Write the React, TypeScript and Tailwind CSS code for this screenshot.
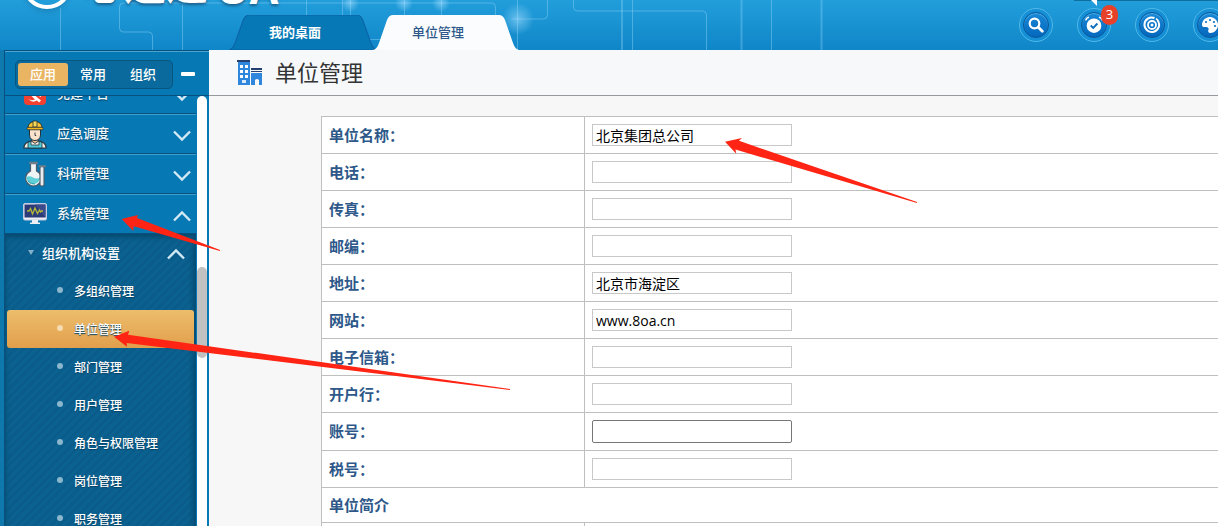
import React from 'react';
import {FaPalette} from 'react-icons/fa';

type Field = {
    id: string;
    label: string;
    value?: string;
    focused?: boolean;
};

const fields: Field[] = [
    {id: 'name', label: '单位名称：', value: '北京集团总公司'},
    {id: 'phone', label: '电话：'},
    {id: 'fax', label: '传真：'},
    {id: 'zip', label: '邮编：'},
    {id: 'address', label: '地址：', value: '北京市海淀区'},
    {id: 'site', label: '网站：', value: 'www.8oa.cn'},
    {id: 'email', label: '电子信箱：'},
    {id: 'bank', label: '开户行：'},
    {id: 'account', label: '账号：', focused: true},
    {id: 'tax', label: '税号：'},
];

const subItems = ['多组织管理', '单位管理', '部门管理', '用户管理', '角色与权限管理', '岗位管理', '职务管理'];

function PartyIcon(): React.JSX.Element {
    return (
        <svg width="24" height="26" viewBox="0 0 24 26">
            <rect x="1" y="2" width="22" height="22" rx="4" fill="#f4402f"/>
            <path d="M5 17.500q3 3 7 1l-4-4 3-3 2 2-1 1 6 5-2 2-2-2q-5 3-9-2z" fill="#fff"/>
            <path d="M13 7q6 2 5 9l-2-1q0-5-3-8z" fill="#fff"/>
        </svg>
    );
}

function WorkerIcon(): React.JSX.Element {
    return (
        <svg width="24" height="29" viewBox="0 0 24 29">
            <path d="M0.800 28c.3-5 3-6.600 8.200-7.200h6c5.200.6 7.900 2.200 8.200 7.200z" fill="#f4efe6" stroke="#22313c" strokeWidth="1.200"/>
            <path d="M5 22v6h14v-6l-3-.5v3.500H8v-3.500z" fill="#4fc9d8" stroke="#22313c" strokeWidth=".8"/>
            <path d="M9 18h6v3.500l-3 2-3-2z" fill="#eab98e" stroke="#22313c" strokeWidth=".8"/>
            <path d="M6.500 9v6c0 3.500 2.500 5.500 5.500 5.500s5.500-2 5.500-5.500V9z" fill="#fbe3cb" stroke="#22313c"/>
            <path d="M12 12.500v3h1.200" fill="none" stroke="#22313c" strokeWidth=".9"/>
            <path d="M5 8c.2-4.300 3-6.500 7-6.500S18.800 3.700 19 8z" fill="#fbc531" stroke="#22313c"/>
            <path d="M10 1h4v6h-4z" fill="#fbd85a" stroke="#22313c" strokeWidth=".8"/>
            <rect x="4" y="7.300" width="16" height="2.500" rx="1" fill="#f7b71c" stroke="#22313c" strokeWidth=".8"/>
        </svg>
    );
}

function FlaskIcon(): React.JSX.Element {
    return (
        <svg width="24" height="26" viewBox="0 0 24 26">
            <path d="M7.500 2h6v8a7.800 7.800 0 1 1-6 0z" fill="#eef3f5" stroke="#4c5966" strokeWidth="1.200"/>
            <path d="M3.500 16q3-1.500 6.500.5t7.200 0a6.800 6.800 0 1 1-13.700-.5z" fill="#5fd0d8"/>
            <rect x="6.200" y=".8" width="8.600" height="2.400" rx="1" fill="#707e8b"/>
            <rect x="17" y="5.500" width="4" height="19.500" rx="1.500" fill="#e6ecef" stroke="#4c5966" strokeWidth="1.100"/>
            <rect x="15.500" y="4.200" width="7.500" height="2" rx="1" fill="#707e8b"/>
            <path d="M5 20q3 3.500 7 3" stroke="#2d9ea7" fill="none"/>
        </svg>
    );
}

function MonitorIcon(): React.JSX.Element {
    return (
        <svg width="24" height="22" viewBox="0 0 24 22">
            <rect x=".5" y=".5" width="23" height="16.500" rx="1.500" fill="#eef0f6" stroke="#c5cbe0"/>
            <rect x="1.500" y="1.500" width="21" height="13" fill="#2c3a78"/>
            <path d="M12 1.500h10.500v13z" fill="#3b4a8b"/>
            <path d="M4 8h2l1.500-2.500L9.500 11l2.500-6 2.500 5.500 2-3.500 1 2 1-1h1.500" fill="none" stroke="#b5b838" strokeWidth="1.300"/>
            <path d="M9 17h6v2.500h2V21H7v-1.500h2z" fill="#eceef4"/>
        </svg>
    );
}

function BuildingIcon(): React.JSX.Element {
    return (
        <svg width="26" height="26" viewBox="0 0 26 26">
            <path d="M1 1h12v24H1z" fill="#2f86dd"/>
            <path d="M0 0h13v2H0z" fill="#26406f"/>
            <path d="M3 5h3v3H3zM8 5h3v3H8zM3 10h3v3H3zM8 10h3v3H8zM3 15h3v3H3zM8 15h3v3H8z" fill="#fff"/>
            <path d="M5 20h4v3H5z" fill="#d7e9fb"/>
            <path d="M14 13h11v12h-3v-5q-2-2-4 0v5h-4z" fill="#2f86dd"/>
            <path d="M14 8h11v2H14zM14 11h11v1H14z" fill="#26406f"/>
        </svg>
    );
}

function SearchGlyph(): React.JSX.Element {
    return (
        <svg width="16" height="16" viewBox="0 0 16 16" fill="none" stroke="#fff" className="shrink-0">
            <circle cx="6.500" cy="6.500" r="4.800" strokeWidth="2.200"/>
            <path d="M10.300 10.300l4 4" strokeWidth="2.800" strokeLinecap="round"/>
        </svg>
    );
}

function AlarmGlyph(): React.JSX.Element {
    return (
        <svg width="18" height="18" viewBox="0 0 18 18" className="shrink-0">
            <circle cx="9" cy="9.700" r="7.300" fill="#fff"/>
            <path d="M.8 4.300q.5-2.500 3.200-3M17.200 4.300q-.5-2.500-3.200-3" fill="none" stroke="#fff" strokeWidth="1.500"/>
            <path d="M5.700 9.500l2.500 2.400 4.200-4.400" fill="none" stroke="#0b6fc0" strokeWidth="1.900"/>
        </svg>
    );
}

function TargetGlyph(): React.JSX.Element {
    return (
        <svg width="18" height="18" viewBox="0 0 18 18" fill="none" stroke="#fff" className="shrink-0">
            <path d="M11.500 2A7.300 7.300 0 1 0 14.700 4.500" strokeWidth="2"/>
            <path d="M13 2.600q1.300.9 2.200 2.200" strokeWidth="1.500"/>
            <circle cx="9" cy="9" r="4" strokeWidth="1.800"/>
            <circle cx="9" cy="9" r="1.500" fill="#fff" stroke="none"/>
        </svg>
    );
}

function Chevron({up}: { up?: boolean }): React.JSX.Element {
    return (
        <svg width="18" height="12" viewBox="0 0 18 12" fill="none" stroke="#d3e8f5" strokeWidth="2.400" className="shrink-0">
            {up ? <path d="M1 10.500l8-8 8 8"/> : <path d="M1 1.500l8 8 8-8"/>}
        </svg>
    );
}

function HeaderLines(): React.JSX.Element {
    return (
        <svg className="absolute inset-0" width="100%" height="50" aria-hidden="true">
            <defs>
                <radialGradient id="glow">
                    <stop offset="0" stopColor="#9fdcff" stopOpacity=".6"/>
                    <stop offset="1" stopColor="#9fdcff" stopOpacity="0"/>
                </radialGradient>
            </defs>
            <g fill="none" stroke="#8fd3f5" strokeOpacity=".45">
                <path d="M60.500 8v42M182.500 0v50M306.500 0v18"/>
                <path d="M152.500 50V36q0-4-4-4h-25q-4 0-4-4V7q0-4 4-4h368q4 0 4 4v12"/>
                <path d="M404.500 0v18M441.500 0v18M342.500 0v18M350.500 0v18M517.500 0v50"/>
                <path d="M547.500 0v15q0 4-4 4h-32M368 39.500h12M573.500 0v7q0 4 4 4h125q4 0 4 4v35"/>
                <path d="M632.500 0v50M771.500 0v50"/>
                <path d="M622 0v50M741.500 0v50M821.500 0v50" strokeWidth="2" strokeOpacity=".35"/>
            </g>
            <circle cx="350" cy="3" r="9" fill="url(#glow)"/>
            <circle cx="404" cy="3" r="9" fill="url(#glow)"/>
            <circle cx="441" cy="3" r="9" fill="url(#glow)"/>
            <circle cx="518" cy="19" r="16" fill="url(#glow)"/>
        </svg>
    );
}

function Tab({label, active}: { label: string; active?: boolean }): React.JSX.Element {
    return (
        <button
            type="button"
            role="tab"
            aria-selected={!!active}
            className={active
                ? 'relative -ml-1 h-[35px] w-[146px] pr-4 text-[13px] font-medium text-[#2d5889]'
                : 'relative h-[35px] w-[148px] pr-4 text-[13px] font-bold text-white'}
        >
            <svg className="absolute inset-0" width="100%" height="100%" viewBox="0 0 146 35" preserveAspectRatio="none">
                <path
                    d="M0 35q4-1 6-7l8-23q2-5 6-5h106q4 0 6 5l8 23q2 6 6 7z"
                    fill={active ? '#fbfcfd' : '#0578b5'}
                    stroke={active ? 'none' : '#0d63a5'}
                />
            </svg>
            <span className="relative">{label}</span>
        </button>
    );
}

function RoundButton({label, children}: { label: string; children: React.ReactNode }): React.JSX.Element {
    return (
        <button
            type="button"
            aria-label={label}
            className="relative flex size-[34px] shrink-0 items-center justify-center rounded-full border border-[#4fb9e8] bg-[#1590d6] p-[3px]"
        >
            <span className="flex size-full items-center justify-center rounded-full border border-[#0a5799] bg-linear-to-b from-[#1a87d6] to-[#0468bd] text-white shadow-[inset_0_1px_1px_#4fb4ea]">
                {children}
            </span>
        </button>
    );
}

function Header(): React.JSX.Element {
    return (
        <header className="relative flex h-[50px] shrink-0 overflow-hidden bg-linear-to-b from-[#229edb] to-[#0f86c8]">
            <HeaderLines/>
            <div className="relative -mt-[45px] flex h-[54px] w-[229px] shrink-0 items-end self-start text-[42px] leading-[50px] font-bold whitespace-nowrap text-white [text-shadow:0_2px_3px_#1a5f8c]">
                <span className="ml-[22px] size-[50px] shrink-0 rounded-full border-4 border-white shadow-md"/>
                <span className="ml-[10px]">心通达</span>
                <span className="-mb-1 ml-2">OA</span>
            </div>
            <div role="tablist" className="relative flex shrink-0 items-end">
                <Tab label="我的桌面"/>
                <Tab label="单位管理" active/>
            </div>
            <div className="relative -mr-[9px] ml-auto flex items-center gap-6">
                <RoundButton label="搜索"><SearchGlyph/></RoundButton>
                <div className="relative">
                    <RoundButton label="提醒"><AlarmGlyph/></RoundButton>
                    <span className="absolute -top-[3px] left-6 flex h-5 w-[17px] items-center justify-center rounded-full bg-[#e8412a] text-[13px] text-white">3</span>
                </div>
                <RoundButton label="目标"><TargetGlyph/></RoundButton>
                <RoundButton label="主题"><FaPalette size={16} className="-scale-x-100"/></RoundButton>
                <svg className="absolute top-0 left-[55px]" width="160" height="6">
                    <path d="M0 0h160v1H0z" fill="#0e6f9f"/>
                    <path d="M17 0h6v6z" fill="#fff"/>
                </svg>
            </div>
        </header>
    );
}

function MenuItem({icon, label, open}: { icon: React.ReactNode; label: string; open?: boolean }): React.JSX.Element {
    return (
        <button
            type="button"
            aria-expanded={!!open}
            className="flex h-10 w-full shrink-0 items-center border-t border-b border-t-[#3f9fce] border-b-[#07507d] pr-[5px] pl-[18px] text-left text-[13px] font-medium text-[#eef7fc] [text-shadow:0_1px_1px_#063f63]"
        >
            <span className="flex w-6 justify-center">{icon}</span>
            <span className="ml-[10px] flex-1">{label}</span>
            <span className="pt-1"><Chevron up={open}/></span>
        </button>
    );
}

function Sidebar(): React.JSX.Element {
    return (
        <aside className="flex w-[209px] shrink-0 flex-col border-l-4 border-[#0f78ac] bg-[#0678b3]">
            <div className="flex h-[46px] shrink-0 items-center border-b border-l border-[#07507d] pl-[10px] shadow-[inset_0_1px_0_#07507d,inset_0_2px_0_#4aa6d2]">
                <div className="mt-1 flex h-[29px] w-[158px] items-center rounded-[5px] border border-[#07567f] bg-[#0a6a9d] px-[2px] text-[13px] font-medium text-white [text-shadow:0_1px_1px_#34506a]">
                    <button type="button" className="h-[23px] w-[50px] rounded-[3px] bg-[#e9b563]">应用</button>
                    <button type="button" className="h-[23px] w-[50px]">常用</button>
                    <button type="button" className="h-[23px] w-[50px]">组织</button>
                </div>
                <button type="button" aria-label="收起" className="mt-[2px] ml-2 h-1 w-[14px] rounded-[1px] bg-white"/>
            </div>
            <div className="flex min-h-0 flex-1">
                <nav className="flex min-w-0 flex-1 flex-col overflow-hidden border-l border-[#07507d]">
                    <div className="-mt-[22px] flex flex-col">
                        <MenuItem icon={<PartyIcon/>} label="党建平台"/>
                        <MenuItem icon={<WorkerIcon/>} label="应急调度"/>
                        <MenuItem icon={<FlaskIcon/>} label="科研管理"/>
                        <MenuItem icon={<MonitorIcon/>} label="系统管理" open/>
                    </div>
                    <div className="bg-[#0b608f] bg-[repeating-linear-gradient(135deg,#0b618f_0px,#0b618f_3px,#0a5d8a_3px,#0a5d8a_6px)] text-white shadow-[inset_0_3px_5px_#084a70,inset_-3px_0_4px_#09507a] [text-shadow:0_1px_1px_#063f63]">
                        <button type="button" aria-expanded="true" className="flex h-[38px] w-full items-center pt-[2px] pr-[11px] pl-[23px] text-left text-[13px] font-medium">
                            <span className="mb-1 border-x-[3px] border-t-[5px] border-x-transparent border-t-[#82b0c9]"/>
                            <span className="ml-2 flex-1">组织机构设置</span>
                            <Chevron up/>
                        </button>
                        <ul>
                            {subItems.map((item) => (
                                <li key={item} className="px-[2px]">
                                    <a
                                        href="#"
                                        className={item === '单位管理'
                                            ? 'flex h-[38px] items-center rounded-[3px] bg-linear-to-b from-[#ecbd6c] to-[#e29f4b] pt-[2px] pl-[50px] text-[12px] font-medium'
                                            : 'flex h-[38px] items-center pt-[2px] pl-[50px] text-[12px] font-medium'}
                                    >
                                        <span className={item === '单位管理'
                                            ? 'mb-1 size-[6px] rounded-full bg-[#f6dcb2]'
                                            : 'mb-1 size-[6px] rounded-full bg-[#8ab7ce]'}/>
                                        <span className="ml-[11px]">{item}</span>
                                    </a>
                                </li>
                            ))}
                        </ul>
                    </div>
                </nav>
                <div className="ml-[1px] mr-[2px] w-[10px] shrink-0 rounded-t-[5px] bg-white pt-[171px]">
                    <div className="h-[91px] rounded-[5px] bg-[#c1c1c1]"/>
                </div>
            </div>
        </aside>
    );
}

function FieldRow({field}: { field: Field }): React.JSX.Element {
    return (
        <tr>
            <th scope="row" className="w-[263px] border border-[#bfbfbf] px-[7px] text-left text-[15px] font-bold text-[#2d5889]">
                <label htmlFor={field.id}>{field.label}</label>
            </th>
            <td className="border border-r-0 border-[#bfbfbf] p-[7px]">
                <input
                    id={field.id}
                    type="text"
                    defaultValue={field.value}
                    className={field.focused
                        ? 'block h-[23px] w-[200px] rounded-[2px] border border-[#767676] bg-white px-[3px] text-[14px] text-black outline-none'
                        : 'block h-[22px] w-[200px] border border-[#c8c8c8] bg-white px-[3px] text-[14px] text-black outline-none'}
                />
            </td>
        </tr>
    );
}

function Arrows(): React.JSX.Element {
    return (
        <svg className="pointer-events-none absolute top-0 left-0" width="920" height="400" fill="#ff2413" aria-hidden="true">
            <path d="M725 141.700L742 138l-3 2.800L917 202v1L735.500 149.500l.8 4.200z"/>
            <path d="M121.700 219L138 215l-1 3L220 250v1L133.700 226.300l-.4 4.700z"/>
            <path d="M114 336.700L129.300 330.700l-1.300 4L510 389v1L126.700 343l.3 3.700z"/>
        </svg>
    );
}

function App(): React.JSX.Element {
    return (
        <div className="relative flex h-screen flex-col overflow-hidden bg-[#f7f7f7] font-['Open_Sans','Noto_Sans_CJK_SC',sans-serif]">
            <Header/>
            <div className="flex min-h-0 flex-1">
                <Sidebar/>
                <main className="min-w-0 flex-1 overflow-hidden">
                    <div className="flex h-[46px] items-center border-b border-[#969a9e] bg-[#f6f8fa] pl-7">
                        <BuildingIcon/>
                        <h1 className="ml-3 text-[22px] text-[#333]">单位管理</h1>
                    </div>
                    <div className="pt-5 pl-28">
                        <table className="w-full border-collapse bg-white">
                            <tbody>
                                {fields.map((field) => <FieldRow key={field.id} field={field}/>)}
                                <tr>
                                    <th colSpan={2} className="h-[35px] border border-r-0 border-[#bfbfbf] px-[7px] text-left text-[15px] font-bold text-[#2d5889]">单位简介</th>
                                </tr>
                                <tr>
                                    <td className="h-10 border border-[#bfbfbf]"/>
                                    <td className="border border-r-0 border-[#bfbfbf]"/>
                                </tr>
                            </tbody>
                        </table>
                    </div>
                </main>
            </div>
            <Arrows/>
        </div>
    );
}

export default App;
